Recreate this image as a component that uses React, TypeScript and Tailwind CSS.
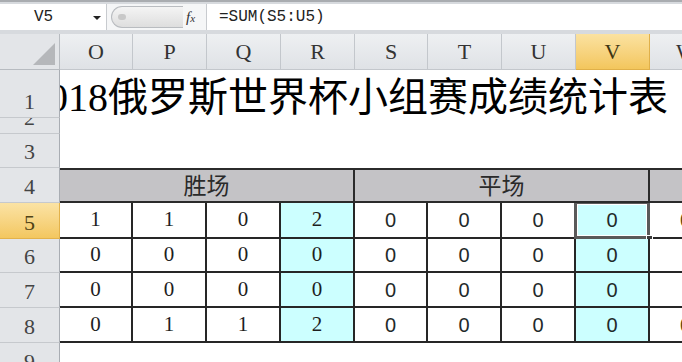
import React from "react";

const letters = ["O", "P", "Q", "R", "S", "T", "U", "V", "W"];
const data = [
  [1, 1, 0, 2, 0, 0, 0, 0],
  [0, 0, 0, 0, 0, 0, 0, 0],
  [0, 0, 0, 0, 0, 0, 0, 0],
  [0, 1, 1, 2, 0, 0, 0, 0],
];
const dataH = ["h-[36px]", "h-[34px]", "h-[35px]", "h-[35px]"];
const grid = "grid grid-cols-[73px_74px_74px_74px_73px_74px_74px_74px_74px] w-[664px]";

const serif = { fontFamily: '"Liberation Serif", "Noto Sans CJK SC", serif' };
const sans = { fontFamily: '"Liberation Sans", Arial, sans-serif' };
const cjk = { fontFamily: '"Liberation Serif", "Noto Sans CJK SC", sans-serif' };

function RowHead({ n, h, active }: { n: string; h: string; active?: boolean }) {
  return (
    <div
      className={`${h} w-[60px] shrink-0 flex items-end justify-center overflow-hidden border-r border-b text-[22px] leading-[30px] ${
        active
          ? "bg-gradient-to-b from-[#fbe3a4] to-[#f3c75f] border-r-[#e3b24a] border-b-[#e3b24a] text-[#4f4216]"
          : "bg-[#e3e5e8] border-r-[#a9adb3] border-b-[#c6c9cd] text-[#444]"
      }`}
      style={serif}
    >
      {n}
    </div>
  );
}

function FormulaBar() {
  return (
    <div className="h-[34px] bg-[#d7dade] border-t-2 border-t-[#a9acb0] pt-[2px] pb-[4px] flex">
      <div className="w-[107px] bg-white flex items-center relative border-r border-[#c8cbcf]">
        <span className="ml-[34px] text-[16px] text-[#222]" style={{ fontFamily: '"Liberation Mono", monospace' }}>
          V5
        </span>
        <span className="absolute left-[93px] top-[12px] w-0 h-0 border-l-[4px] border-r-[4px] border-t-[4px] border-l-transparent border-r-transparent border-t-[#222]" />
      </div>
      <div className="w-[99px] bg-[#f5f6f7] flex items-center">
        <div className="ml-[4px] h-[22px] w-[72px] rounded-l-full bg-gradient-to-b from-[#f4f4f4] to-[#dedede] border border-r-0 border-[#b9bcc0] flex items-center">
          <span className="ml-[6px] w-[8px] h-[6px] rounded-full bg-[#c8c8c8]" />
        </div>
        <span className="ml-[3px] italic text-[15px] text-[#333]" style={serif}>
          f<span className="text-[11px]">x</span>
        </span>
      </div>
      <div className="flex-1 bg-white flex items-center border-l border-[#c8cbcf]">
        <span className="ml-[12px] text-[16px] text-[#222]" style={{ fontFamily: '"Liberation Mono", monospace' }}>
          =SUM(S5:U5)
        </span>
      </div>
    </div>
  );
}

export default function App() {
  return (
    <div className="w-[682px] h-[362px] overflow-hidden bg-white">
      <FormulaBar />

      {/* column headers */}
      <div className="flex h-[36px] overflow-hidden">
        <div className="w-[60px] shrink-0 bg-[#e3e5e8] border-r border-b border-[#b7bbc0] relative">
          <svg className="absolute right-[4px] bottom-[4px]" width="22" height="22">
            <polygon points="22,0 22,22 0,22" fill="#b5b7ba" />
          </svg>
        </div>
        <div className={`${grid} shrink-0`}>
          {letters.map((l) => (
            <div
              key={l}
              className={`flex items-center justify-center border-r border-b text-[22px] ${
                l === "V"
                  ? "bg-gradient-to-b from-[#fbe2a0] to-[#f3c65c] border-[#e0b049] text-[#3f3512]"
                  : "bg-gradient-to-b from-[#eef0f2] to-[#dfe2e6] border-[#c3c7cc] text-[#333]"
              }`}
              style={serif}
            >
              {l}
            </div>
          ))}
        </div>
      </div>

      {/* row 1: title */}
      <div className="flex">
        <RowHead n="1" h="h-[48px]" />
        <div className="flex-1 overflow-hidden relative">
          <div className="absolute left-[-32px] top-[8px] whitespace-nowrap text-[40px] leading-none text-black" style={cjk}>
            2018俄罗斯世界杯小组赛成绩统计表
          </div>
        </div>
      </div>

      {/* row 2 (squashed) */}
      <div className="flex">
        <RowHead n="2" h="h-[16px]" />
        <div className="flex-1" />
      </div>

      {/* row 3 */}
      <div className="flex">
        <RowHead n="3" h="h-[34px]" />
        <div className="flex-1" />
      </div>

      {/* row 4: group header */}
      <div className="flex overflow-hidden">
        <RowHead n="4" h="h-[35px]" />
        <div className={`${grid} shrink-0 h-[35px] bg-[#c4c3c6] border-t-2 border-b-2 border-[#2b2b2b] text-[23px] text-[#2a2a2a]`} style={cjk}>
          <div className="col-span-4 flex items-center justify-center border-r-2 border-[#2b2b2b]">胜场</div>
          <div className="col-span-4 flex items-center justify-center border-r-2 border-[#2b2b2b]">平场</div>
          <div />
        </div>
      </div>

      {/* data rows */}
      {data.map((row, r) => (
        <div className="flex overflow-hidden" key={r}>
          <RowHead n={String(r + 5)} h={dataH[r]} active={r === 0} />
          <div className={`${grid} shrink-0 ${dataH[r]}`}>
            {row.map((v, c) => {
              const hl = c === 3 || c === 7;
              const sel = r === 0 && c === 7;
              return (
                <div
                  key={c}
                  className={`relative flex items-center justify-center border-r-2 border-b-2 border-[#262626] ${
                    hl ? "bg-[#ccffff]" : "bg-white"
                  } ${c < 4 ? "text-[21px] text-[#1e1e1e]" : "text-[20px] text-[#1f2a2a]"}`}
                  style={c < 4 ? serif : sans}
                >
                  {v}
                  {sel && (
                    <>
                      <span className="absolute inset-[-2px] border-[3px] border-[#5a5a5a] outline outline-1 outline-white -outline-offset-4" />
                      <span className="absolute right-[-5px] bottom-[-5px] w-[7px] h-[7px] bg-[#3a3a3a] border border-white" />
                    </>
                  )}
                </div>
              );
            })}
            <div className="flex items-center pl-[30px] border-b-2 border-[#262626] text-[20px] text-[#5c4a14]" style={sans}>
              {r === 0 || r === 3 ? "0" : ""}
            </div>
          </div>
        </div>
      ))}

      {/* row 9 */}
      <div className="flex">
        <RowHead n="9" h="h-[35px]" />
        <div className="flex-1" />
      </div>
    </div>
  );
}
